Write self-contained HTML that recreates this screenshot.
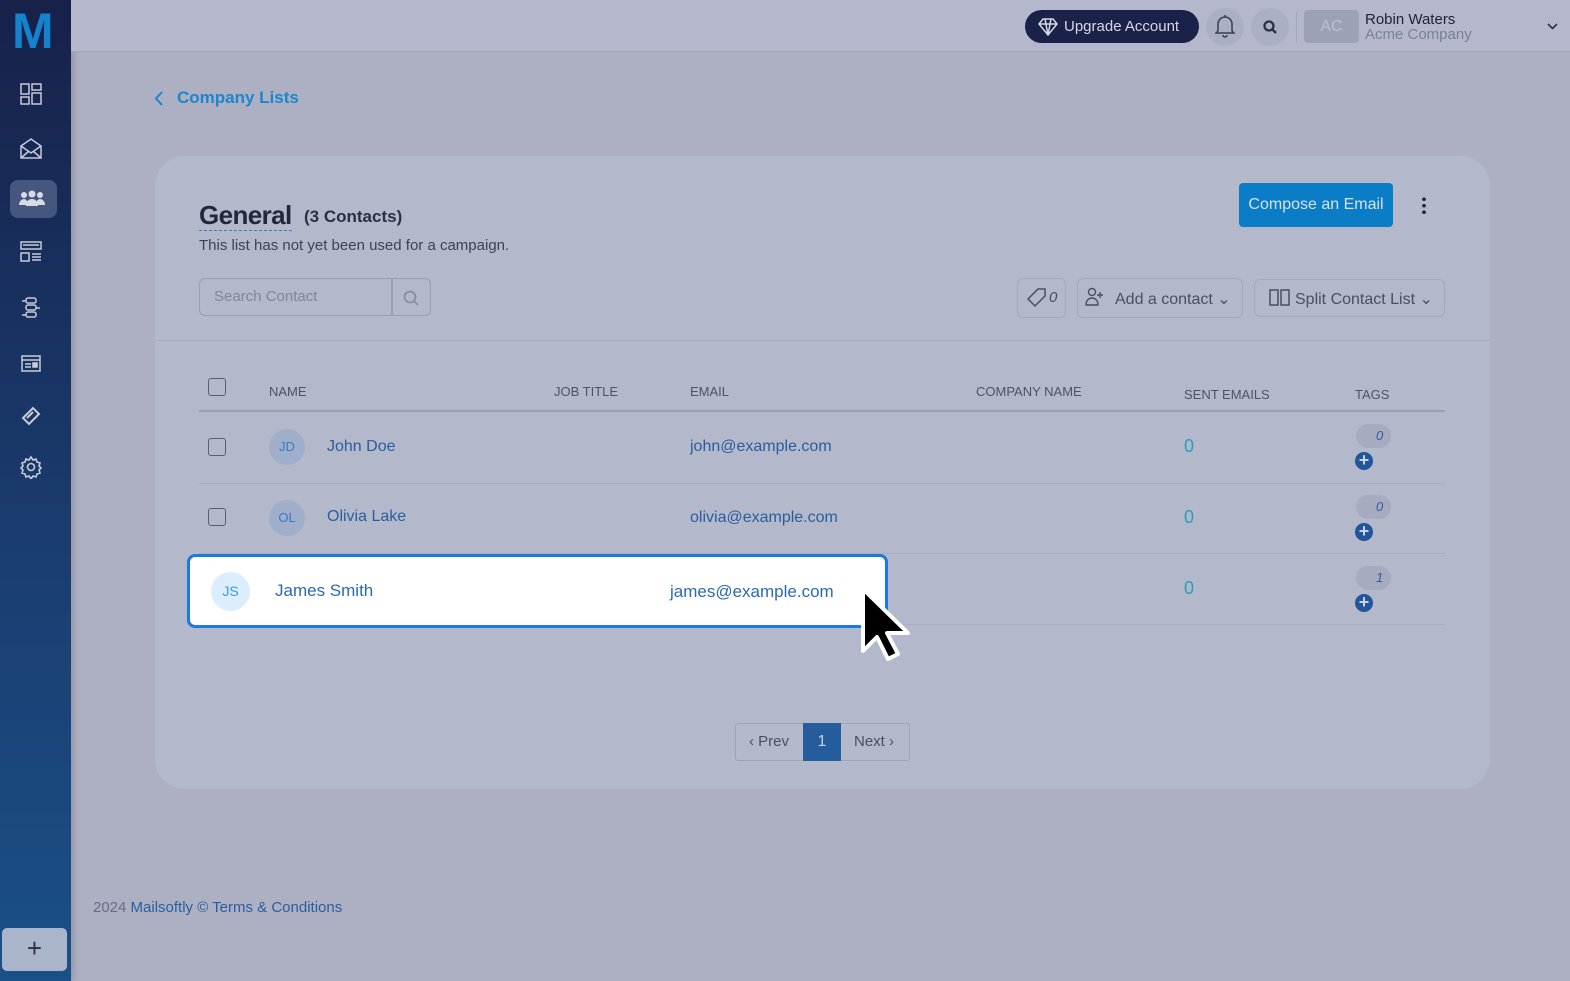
<!DOCTYPE html>
<html><head><meta charset="utf-8"><style>
*{box-sizing:border-box;margin:0;padding:0}
body{width:1570px;height:981px;overflow:hidden;background:#adb0c3;font-family:"Liberation Sans",sans-serif;position:relative}
.sb{position:absolute;left:0;top:0;width:71px;height:981px;background:linear-gradient(#17214a,#1a3f72 60%,#1a5088);box-shadow:3px 0 6px rgba(0,0,0,.15)}
.logo{position:absolute;left:12px;top:2px;font-size:50px;font-weight:bold;color:#1582cc;letter-spacing:-2px}
.ic{position:absolute;left:19px;width:24px;height:24px}
.hdr{position:absolute;left:71px;top:0;right:0;height:52px;background:#b5b8cc;border-bottom:1px solid #a3a6b9}
.abs{position:absolute}
.card{position:absolute;left:155px;top:156px;width:1335px;height:633px;background:#b4b8cb;border-radius:30px}
.hd{font-size:13px;color:#4e5266;position:absolute}
.cb{position:absolute;width:18px;height:18px;border:1.5px solid #5a5e70;border-radius:3px}
.av{position:absolute;width:36px;height:36px;border-radius:50%;background:#9eaecb;color:#3e79bd;font-size:13px;text-align:center;line-height:36px}
.nm{position:absolute;font-size:16px;color:#2a5d9e}
.z{position:absolute;font-size:18px;color:#2c9db8}
.tag{position:absolute;width:35px;height:24px;border-radius:12px;background:#a6abbf;font-size:13px;font-style:italic;color:#2f5d9a;padding:4px 0 0 20px}
.pl{position:absolute;width:18px;height:18px;border-radius:50%;background:#21569b;color:#c8d3e6;font-weight:bold;font-size:18px;line-height:17px;text-align:center}
.btn{position:absolute;border:1px solid #a4a8bb;border-radius:6px;color:#4a4e60;font-size:16px}
</style></head><body>
<div class="sb">
<div class="logo">M</div>
<svg class="ic" style="top:82px" viewBox="0 0 24 24" fill="none" stroke="#c8cbd8" stroke-width="1.5"><rect x="2" y="2" width="8" height="10"/><rect x="13" y="2" width="9" height="6"/><rect x="2" y="15" width="8" height="7"/><rect x="13" y="11" width="9" height="11"/></svg>
<svg class="ic" style="top:136px" viewBox="0 0 24 24" fill="none" stroke="#c8cbd8" stroke-width="1.5"><path d="M2 10v12h20V10L12 3z"/><path d="M2 22l8-7M22 22l-8-7M2 10l10 7 10-7"/></svg>
<div class="abs" style="left:10px;top:180px;width:47px;height:38px;border-radius:8px;background:#45577e"></div>
<svg class="ic" style="top:187px;left:18px;width:28px" viewBox="0 0 28 24" fill="#d8dbe6"><circle cx="6" cy="8" r="3"/><circle cx="14" cy="7" r="3.5"/><circle cx="22" cy="8" r="3"/><path d="M1 18c0-4 3-6 5-6s4 2 4 6zM8 19c0-5 3-7 6-7s6 2 6 7zM18 18c0-4 2-6 4-6s5 2 5 6z"/></svg>
<svg class="ic" style="top:240px" viewBox="0 0 24 24" fill="none" stroke="#c8cbd8" stroke-width="1.5"><rect x="2" y="2" width="20" height="7"/><rect x="2" y="13" width="8" height="8"/><path d="M13 14h9M13 17h9M13 20h9M4 5h16"/></svg>
<svg class="ic" style="top:296px" viewBox="0 0 24 24" fill="none" stroke="#c8cbd8" stroke-width="1.5"><rect x="7" y="2" width="10" height="5" rx="2"/><rect x="7" y="9" width="10" height="5" rx="2"/><rect x="7" y="16" width="10" height="5" rx="2"/><path d="M3 5h4M17 12h4M3 19h4"/></svg>
<svg class="ic" style="top:352px" viewBox="0 0 24 24" fill="none" stroke="#c8cbd8" stroke-width="1.5"><rect x="3" y="4" width="18" height="15"/><path d="M3 8h18M6 12h6M6 15h6"/><rect x="14" y="11" width="4" height="4" fill="#c8cbd8"/></svg>
<svg class="ic" style="top:404px" viewBox="0 0 24 24" fill="none" stroke="#c8cbd8" stroke-width="2"><path d="M4 14L14 4l6 6-10 10z"/><path d="M8 14l6-6"/></svg>
<svg class="ic" style="top:455px" viewBox="0 0 24 24" fill="none" stroke="#c8cbd8" stroke-width="1.6"><circle cx="12" cy="12" r="3.5"/><path d="M12 2l2 3 3-1 1 3 3 1-1 3 2 2-2 2 1 3-3 1-1 3-3-1-2 3-2-3-3 1-1-3-3-1 1-3-2-2 2-2-1-3 3-1 1-3 3 1z"/></svg>
<div class="abs" style="left:2px;top:928px;width:65px;height:43px;border-radius:5px;background:#aab4cb;color:#2a2f45;font-size:26px;text-align:center;line-height:40px">+</div>
</div>
<div class="hdr">
<div class="abs" style="left:954px;top:10px;width:174px;height:33px;border-radius:17px;background:#1a2249;color:#d5d8e4;font-size:15px;line-height:33px;padding-left:39px">Upgrade Account</div>
<svg class="abs" style="left:967px;top:18px" width="20" height="18" viewBox="0 0 20 18" fill="none" stroke="#d5d8e4" stroke-width="1.5"><path d="M1 6l4-5h10l4 5-9 11zM1 6h18M7 1l3 16 3-16"/></svg>
<div class="abs" style="left:1135px;top:8px;width:38px;height:38px;border-radius:50%;background:#abafc3"></div>
<svg class="abs" style="left:1144px;top:14px" width="20" height="24" viewBox="0 0 20 24" fill="none" stroke="#3b3f52" stroke-width="1.5"><path d="M3 17V10a7 7 0 0114 0v7l2 2H1zM8 21a2 2 0 004 0M10 1v2"/></svg>
<div class="abs" style="left:1180px;top:8px;width:38px;height:38px;border-radius:50%;background:#abafc3"></div>
<svg class="abs" style="left:1191px;top:19px" width="16" height="16" viewBox="0 0 16 16" fill="none" stroke="#2c3045" stroke-width="2.3"><circle cx="7" cy="7" r="4.5"/><path d="M10.5 10.5L14 14"/></svg>
<div class="abs" style="left:1225px;top:12px;width:1px;height:30px;background:#a3a6b9"></div>
<div class="abs" style="left:1233px;top:10px;width:55px;height:33px;border-radius:4px;background:#9da1b6;color:#bcc0d0;font-size:16px;text-align:center;line-height:33px">AC</div>
<div class="abs" style="left:1294px;top:11px;font-size:15px;color:#1e2233">Robin Waters</div>
<div class="abs" style="left:1294px;top:26px;font-size:15px;color:#7a809a">Acme Company</div>
<svg class="abs" style="left:1476px;top:23px" width="11" height="8" viewBox="0 0 11 8" fill="none" stroke="#2c3045" stroke-width="1.6"><path d="M1 1l4.5 4.5L10 1"/></svg>
</div>
<svg class="abs" style="left:154px;top:91px" width="10" height="15" viewBox="0 0 10 15" fill="none" stroke="#1b85cd" stroke-width="2"><path d="M8 1L2 7.5 8 14"/></svg>
<div class="abs" style="left:177px;top:88px;font-size:17px;font-weight:bold;color:#1b85cd">Company Lists</div>
<div class="card">
<div class="abs" style="left:44px;top:44px;font-size:26px;font-weight:bold;color:#22283d;border-bottom:1.5px dashed #3a7ec4;line-height:30px;letter-spacing:-0.6px">General</div>
<div class="abs" style="left:149px;top:51px;font-size:17px;font-weight:bold;color:#2a2f43">(3 Contacts)</div>
<div class="abs" style="left:44px;top:81px;font-size:15px;color:#3d4155">This list has not yet been used for a campaign.</div>
<div class="abs" style="left:1084px;top:27px;width:154px;height:44px;border-radius:4px;background:#0b7dc6;color:#d8e2ef;font-size:16px;text-align:center;line-height:44px">Compose an Email</div>
<div class="abs" style="left:1267px;top:40px;width:4px;height:18px;background:radial-gradient(circle,#252a3e 1.8px,transparent 2px) 0 0/4px 6.5px"></div>
<div class="abs" style="left:44px;top:122px;width:232px;height:38px;border:1.5px solid #9a9eb1;border-radius:6px"></div>
<div class="abs" style="left:236px;top:123px;width:1.5px;height:36px;background:#9a9eb1"></div>
<div class="abs" style="left:59px;top:132px;font-size:15px;color:#80859a">Search Contact</div>
<svg class="abs" style="left:247px;top:133px" width="18" height="18" viewBox="0 0 18 18" fill="none" stroke="#8a8ea2" stroke-width="1.8"><circle cx="8" cy="8" r="5.5"/><path d="M12 12l4 4"/></svg>
<div class="btn" style="left:862px;top:122px;width:49px;height:40px"></div>
<svg class="abs" style="left:871px;top:131px" width="22" height="22" viewBox="0 0 22 22" fill="none" stroke="#4a4e60" stroke-width="1.5"><path d="M2 12L12 2h7v7L9 19z"/></svg>
<div class="abs" style="left:894px;top:133px;font-size:15px;font-style:italic;color:#4a4e60">0</div>
<div class="btn" style="left:922px;top:122px;width:166px;height:40px;padding:10px 0 0 37px">Add a contact ⌄</div>
<svg class="abs" style="left:930px;top:131px" width="20" height="20" viewBox="0 0 20 20" fill="none" stroke="#4a4e60" stroke-width="1.4"><circle cx="7" cy="5" r="3.5"/><path d="M1 18c0-5 3-7 6-7s6 2 6 7zM15 5v6M12 8h6"/></svg>
<div class="btn" style="left:1099px;top:123px;width:191px;height:38px;padding:9px 0 0 40px">Split Contact List ⌄</div>
<svg class="abs" style="left:1114px;top:133px" width="21" height="17" viewBox="0 0 21 17" fill="none" stroke="#4a4e60" stroke-width="1.5"><rect x="1" y="1" width="8" height="15"/><rect x="12" y="1" width="8" height="15"/></svg>
<div class="abs" style="left:0;top:184px;width:1335px;height:1px;background:#a8abbe"></div>
<div class="cb" style="left:53px;top:222px"></div>
<div class="hd" style="left:114px;top:228px">NAME</div>
<div class="hd" style="left:399px;top:228px">JOB TITLE</div>
<div class="hd" style="left:535px;top:228px">EMAIL</div>
<div class="hd" style="left:821px;top:228px">COMPANY NAME</div>
<div class="hd" style="left:1029px;top:231px">SENT EMAILS</div>
<div class="hd" style="left:1200px;top:231px">TAGS</div>
<div class="abs" style="left:44px;top:254px;width:1246px;height:2px;background:#9a9eb1"></div>
<div class="cb" style="left:53px;top:282px"></div>
<div class="av" style="left:114px;top:273px">JD</div>
<div class="nm" style="left:172px;top:282px">John Doe</div>
<div class="nm" style="left:535px;top:282px">john@example.com</div>
<div class="z" style="left:1029px;top:280px">0</div>
<div class="tag" style="left:1201px;top:268px">0</div><div class="pl" style="left:1200px;top:296px">+</div>
<div class="abs" style="left:44px;top:327px;width:1246px;height:1px;background:#a9adc0"></div>
<div class="cb" style="left:53px;top:352px"></div>
<div class="av" style="left:114px;top:344px">OL</div>
<div class="nm" style="left:172px;top:352px">Olivia Lake</div>
<div class="nm" style="left:535px;top:353px">olivia@example.com</div>
<div class="z" style="left:1029px;top:351px">0</div>
<div class="tag" style="left:1201px;top:339px">0</div><div class="pl" style="left:1200px;top:367px">+</div>
<div class="abs" style="left:44px;top:397px;width:1246px;height:1px;background:#a9adc0"></div>
<div class="z" style="left:1029px;top:422px">0</div>
<div class="tag" style="left:1201px;top:410px">1</div><div class="pl" style="left:1200px;top:438px">+</div>
<div class="abs" style="left:44px;top:468px;width:1246px;height:1px;background:#a9adc0"></div>
<div class="abs" style="left:580px;top:567px;width:175px;height:38px;border:1px solid #9fa3b6;border-radius:3px"></div>
<div class="abs" style="left:594px;top:577px;font-size:15px;color:#4a4e60">‹ Prev</div>
<div class="abs" style="left:648px;top:567px;width:38px;height:38px;background:#255c9c;color:#c6d1e4;font-size:16px;text-align:center;line-height:38px">1</div>
<div class="abs" style="left:699px;top:577px;font-size:15px;color:#4a4e60">Next ›</div>
</div>
<div class="abs" style="left:187px;top:554px;width:701px;height:74px;border:3px solid #1a7ae0;border-radius:8px;background:#fff"></div>
<div class="abs" style="left:211px;top:572px;width:39px;height:39px;border-radius:50%;background:#dceefc;color:#3d9ae0;font-size:14px;text-align:center;line-height:39px">JS</div>
<div class="abs" style="left:275px;top:581px;font-size:17px;color:#2a6ab4">James Smith</div>
<div class="abs" style="left:670px;top:582px;font-size:17px;color:#2a6ab4">james@example.com</div>
<svg class="abs" style="left:858px;top:585px" width="56" height="76" viewBox="0 0 56 76"><path d="M5 4v62l14-14 11 22 10-5-11-21h21z" fill="#000" stroke="#fff" stroke-width="4" stroke-linejoin="round"/></svg>
<div class="abs" style="left:93px;top:899px;font-size:15px;color:#686d85">2024 <span style="color:#2a5d9e">Mailsoftly © Terms &amp; Conditions</span></div>
</body></html>
